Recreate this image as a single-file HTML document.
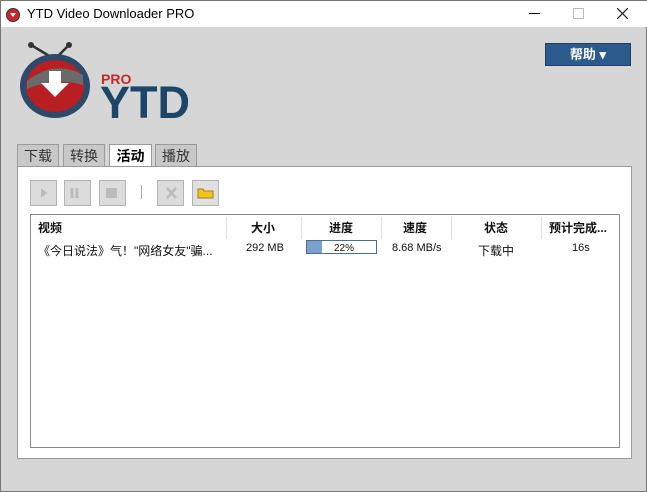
<!DOCTYPE html><html><head><meta charset="utf-8"><style>
body{margin:0;width:647px;height:492px;background:#d6d6d6;font-family:"Liberation Sans","Noto Sans CJK SC",sans-serif;position:relative;overflow:hidden;border:1px solid #777;box-sizing:border-box}
.a{position:absolute}
.tb{background:#fff;left:0;top:0;width:647px;height:26px}
.tab{top:143px;height:22px;background:#c8c8c8;border:1px solid #9a9a9a;border-bottom:none;font-size:14px;text-align:center;line-height:22px;color:#333;box-sizing:border-box}
.btn{top:179px;width:27px;height:26px;background:#dcdcdc;border:1px solid #b4b4b4;box-sizing:border-box}
.h{top:218px;font-size:12px;font-weight:bold;color:#111}
.c{top:241px;font-size:12px;color:#111}
</style></head><body>
<div class="a tb"></div>
<svg class="a" style="left:4px;top:5px" width="16" height="16"><circle cx="8" cy="9" r="6.5" fill="#c8282a" stroke="#333"/><path d="M5 7h6l-3 4z" fill="#fff"/></svg>
<div class="a" style="left:26px;top:5px;font-size:13px;color:#000">YTD Video Downloader PRO</div>
<div class="a" style="left:528px;top:12px;width:11px;height:1px;background:#000"></div>
<div class="a" style="left:572px;top:7px;width:9px;height:9px;border:1px solid #bbb"></div>
<svg class="a" style="left:616px;top:7px" width="11" height="11"><path d="M0 0L11 11M11 0L0 11" stroke="#222" stroke-width="1.2"/></svg>
<div class="a" style="left:544px;top:42px;width:86px;height:23px;background:#2b5a8c;border:1px solid #1e3f66;box-sizing:border-box;color:#fff;font-size:13px;font-weight:bold;text-align:center;line-height:21px">帮助 ▾</div>
<svg class="a" style="left:16px;top:40px" width="84" height="84">
<path d="M14 4L34 16M52 4L40 16" stroke="#333" stroke-width="2.5"/><circle cx="14" cy="4" r="3" fill="#333"/><circle cx="52" cy="4" r="3" fill="#333"/>
<ellipse cx="38" cy="45" rx="35" ry="32" fill="#2c4a6a"/><ellipse cx="38" cy="45" rx="29" ry="26" fill="#b81e22"/>
<path d="M10 40Q38 18 66 34L66 44Q38 36 10 48z" fill="#6a6a6a"/>
<path d="M32 30h12v12h8l-14 14-14-14h8z" fill="#fff"/></svg>
<div class="a" style="left:100px;top:70px;font-size:14px;font-weight:bold;color:#c8282a">PRO</div>
<div class="a" style="left:99px;top:79px;font-size:45px;font-weight:bold;color:#1c4668;line-height:45px">YTD</div>
<div class="a tab" style="left:16px;width:42px">下载</div>
<div class="a tab" style="left:62px;width:42px">转换</div>
<div class="a tab" style="left:108px;width:43px;background:#fff;height:24px;font-weight:bold;color:#000">活动</div>
<div class="a tab" style="left:154px;width:42px">播放</div>
<div class="a" style="left:16px;top:165px;width:615px;height:293px;background:#fff;border:1px solid #9a9a9a;box-sizing:border-box"></div>
<div class="a btn" style="left:29px"></div><div class="a btn" style="left:63px"></div><div class="a btn" style="left:98px"></div>
<div class="a" style="left:140px;top:184px;width:1px;height:14px;background:#aaa"></div>
<div class="a btn" style="left:156px"></div><div class="a btn" style="left:191px;background:#e0e0e0"></div>
<svg class="a" style="left:29px;top:179px" width="200" height="26"><path d="M11 8l6 5-6 5z" fill="#bbb"/><path d="M42 8v10M47 8v10" stroke="#bbb" stroke-width="3"/><rect x="76" y="8" width="11" height="10" fill="#bbb"/><path d="M137 8l9 10M146 8l-9 10" stroke="#bbb" stroke-width="2.5"/><path d="M168 9h5l1 2h9v7h-15z" fill="#f0c419" stroke="#a08020"/></svg>
<div class="a" style="left:29px;top:213px;width:590px;height:234px;border:1px solid #8a8a8a;box-sizing:border-box"></div>
<div class="a" style="left:225px;top:216px;width:1px;height:22px;background:#ddd"></div>
<div class="a" style="left:300px;top:216px;width:1px;height:22px;background:#ddd"></div>
<div class="a" style="left:380px;top:216px;width:1px;height:22px;background:#ddd"></div>
<div class="a" style="left:450px;top:216px;width:1px;height:22px;background:#ddd"></div>
<div class="a" style="left:540px;top:216px;width:1px;height:22px;background:#ddd"></div>
<div class="a h" style="left:37px">视频</div>
<div class="a h" style="left:250px">大小</div>
<div class="a h" style="left:328px">进度</div>
<div class="a h" style="left:402px">速度</div>
<div class="a h" style="left:483px">状态</div>
<div class="a h" style="left:548px">预计完成...</div>
<div class="a c" style="left:37px">《今日说法》气！"网络女友"骗...</div>
<div class="a c" style="left:245px;font-size:11px">292 MB</div>
<div class="a" style="left:305px;top:239px;width:71px;height:14px;border:1px solid #4a7090;box-sizing:border-box"><div style="width:15px;height:12px;background:#7aa0d0"></div></div>
<div class="a c" style="left:333px;font-size:10px;top:242px">22%</div>
<div class="a c" style="left:391px;font-size:11px">8.68 MB/s</div>
<div class="a c" style="left:477px">下载中</div>
<div class="a c" style="left:571px;font-size:11px">16s</div>
</body></html>
